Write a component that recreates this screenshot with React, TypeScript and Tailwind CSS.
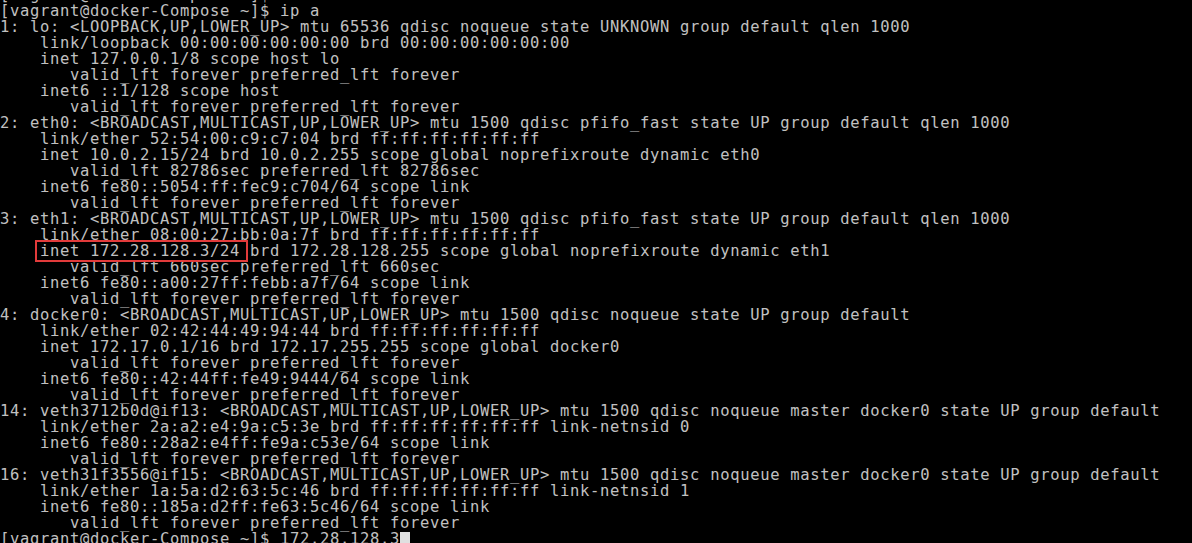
const lines: string[] = [
  "[vagrant@docker-Compose ~]$ ",
  "[vagrant@docker-Compose ~]$ ip a",
  "1: lo: <LOOPBACK,UP,LOWER_UP> mtu 65536 qdisc noqueue state UNKNOWN group default qlen 1000",
  "    link/loopback 00:00:00:00:00:00 brd 00:00:00:00:00:00",
  "    inet 127.0.0.1/8 scope host lo",
  "       valid_lft forever preferred_lft forever",
  "    inet6 ::1/128 scope host",
  "       valid_lft forever preferred_lft forever",
  "2: eth0: <BROADCAST,MULTICAST,UP,LOWER_UP> mtu 1500 qdisc pfifo_fast state UP group default qlen 1000",
  "    link/ether 52:54:00:c9:c7:04 brd ff:ff:ff:ff:ff:ff",
  "    inet 10.0.2.15/24 brd 10.0.2.255 scope global noprefixroute dynamic eth0",
  "       valid_lft 82786sec preferred_lft 82786sec",
  "    inet6 fe80::5054:ff:fec9:c704/64 scope link",
  "       valid_lft forever preferred_lft forever",
  "3: eth1: <BROADCAST,MULTICAST,UP,LOWER_UP> mtu 1500 qdisc pfifo_fast state UP group default qlen 1000",
  "    link/ether 08:00:27:bb:0a:7f brd ff:ff:ff:ff:ff:ff",
  "HIGHLIGHT",
  "       valid_lft 660sec preferred_lft 660sec",
  "    inet6 fe80::a00:27ff:febb:a7f/64 scope link",
  "       valid_lft forever preferred_lft forever",
  "4: docker0: <BROADCAST,MULTICAST,UP,LOWER_UP> mtu 1500 qdisc noqueue state UP group default",
  "    link/ether 02:42:44:49:94:44 brd ff:ff:ff:ff:ff:ff",
  "    inet 172.17.0.1/16 brd 172.17.255.255 scope global docker0",
  "       valid_lft forever preferred_lft forever",
  "    inet6 fe80::42:44ff:fe49:9444/64 scope link",
  "       valid_lft forever preferred_lft forever",
  "14: veth3712b0d@if13: <BROADCAST,MULTICAST,UP,LOWER_UP> mtu 1500 qdisc noqueue master docker0 state UP group default",
  "    link/ether 2a:a2:e4:9a:c5:3e brd ff:ff:ff:ff:ff:ff link-netnsid 0",
  "    inet6 fe80::28a2:e4ff:fe9a:c53e/64 scope link",
  "       valid_lft forever preferred_lft forever",
  "16: veth31f3556@if15: <BROADCAST,MULTICAST,UP,LOWER_UP> mtu 1500 qdisc noqueue master docker0 state UP group default",
  "    link/ether 1a:5a:d2:63:5c:46 brd ff:ff:ff:ff:ff:ff link-netnsid 1",
  "    inet6 fe80::185a:d2ff:fe63:5c46/64 scope link",
  "       valid_lft forever preferred_lft forever",
  "PROMPT",
];

function Line({ text }: { text: string }) {
  if (text === "HIGHLIGHT") {
    return (
      <div className="h-[16px]">
        {"    "}
        <span className="relative inline-block h-[16px]">
          inet 172.28.128.3/24
          <span className="absolute -left-[5px] -right-[8px] -top-[3px] -bottom-[3px] border-2 border-[#e23b3b]" />
        </span>
        {" brd 172.28.128.255 scope global noprefixroute dynamic eth1"}
      </div>
    );
  }
  if (text === "PROMPT") {
    return (
      <div className="h-[16px]">
        {"[vagrant@docker-Compose ~]$ 172.28.128.3"}
        <span className="inline-block w-[10px] h-[14px] align-top mt-[1px] bg-[#e0e0e0]" />
      </div>
    );
  }
  return <div className="h-[16px]">{text}</div>;
}

export default function App() {
  return (
    <div className="w-[1192px] h-[543px] overflow-hidden bg-black">
      <div
        className="-mt-[13px] whitespace-pre text-[15.5px] tracking-[0.67px] leading-[16px] text-[#c0c0c0]"
        style={{ fontFamily: '"DejaVu Sans Mono", "Liberation Mono", monospace' }}
      >
        {lines.map((l, i) => (
          <Line key={i} text={l} />
        ))}
      </div>
    </div>
  );
}
